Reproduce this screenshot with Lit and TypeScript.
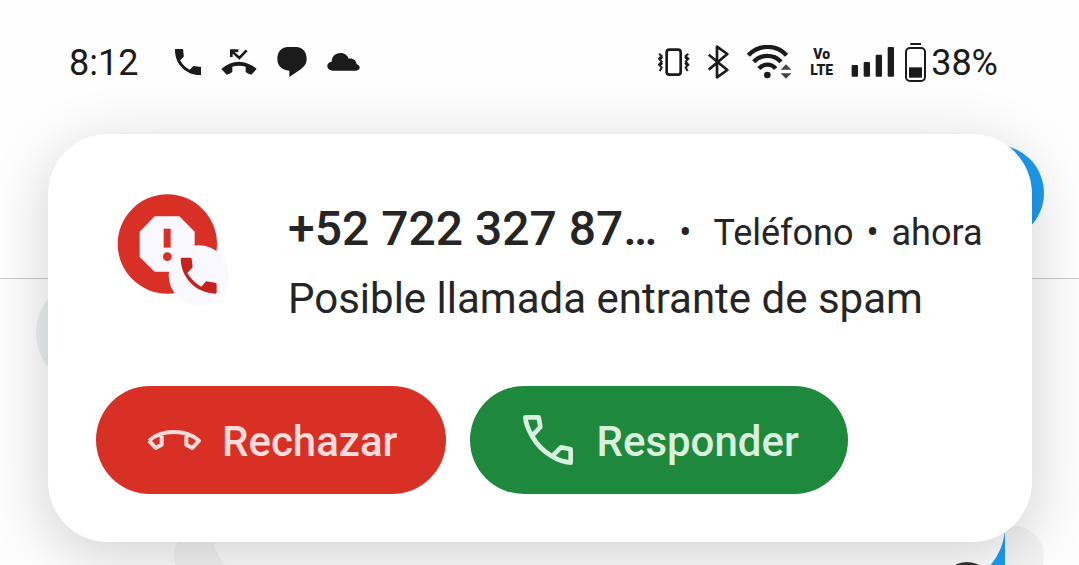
import { LitElement, html, css } from 'lit'
import { customElement, property } from 'lit/decorators.js'

@customElement('status-bar')
class StatusBar extends LitElement {
    static styles = css`
        :host {
            display: flex;
            justify-content: space-between;
            height: 124px;
            padding: 0 81px 0 69px;
            color: #1b1b1b;
            font-size: 36px;
        }

        .group {
            display: flex;
            align-items: center;
            gap: 18px;
        }

        .notifications {
            gap: 20px;
        }

        .time {
            margin-right: 17px;
        }

        .time,
        .percent {
            padding-top: 2px;
        }

        .battery {
            display: flex;
            align-items: center;
            gap: 5px;
        }

        .signals {
            display: flex;
            align-items: center;
            gap: 10px;
        }

        .volte {
            display: grid;
            grid-auto-rows: 16px;
            font-size: 14px;
            font-weight: 900;
            line-height: 16px;
            text-align: center;
        }

        svg {
            display: block;
            fill: currentColor;
        }

        .line {
            fill: none;
            stroke: currentColor;
        }
    `

    render() {
        return html`
            <div class="group notifications">
                <span class="time">8:12</span>
                <svg width="26" height="26" viewBox="3 3 18 18">
                    <path d="M21 15.46l-5.27-.61-2.52 2.52c-2.83-1.44-5.15-3.75-6.59-6.59l2.53-2.53L8.54 3H3.03C2.45 13.18 10.82 21.55 21 20.97v-5.51z" />
                </svg>
                <svg width="36" height="28" viewBox="516 55 108 84">
                    <path d="M517 118Q542 96 570 96T623 118L607 135Q598 133 590 127V111Q570 106 550 111V127Q542 133 533 135Z" />
                    <path class="line" stroke-width="8" d="M547 82V63H568M547 63L571 85L593 62" />
                </svg>
                <svg width="30" height="30" viewBox="681 51 90 90">
                    <path d="M711 51H741C760 53 770 68 770 87C770 106 756 116 740 126L718 141V122C695 120 682 107 682 87C682 67 692 54 711 51Z" />
                </svg>
                <svg width="33" height="18" viewBox="832 66 99 54">
                    <path d="M848 119C828 118 828 94 846 92C847 74 859 66 873 66C885 66 893 73 897 83C910 81 920 88 921 100C934 103 933 119 918 119Z" />
                </svg>
            </div>
            <div class="group">
                <svg width="32" height="28" viewBox="63 53 96 84">
                    <rect class="line" x="89" y="58" width="42" height="75" rx="8" stroke-width="8" />
                    <path class="line" stroke-width="6" d="M66 70L74 77L66 85L74 94L66 103L74 112L68 122M76 80L69 88M76 98L69 106M154 70L146 77L154 85L146 94L154 103L146 112L152 122M144 80L151 88M144 98L151 106" />
                </svg>
                <svg width="21" height="34" viewBox="214 45 63 102">
                    <path class="line" stroke-width="8" stroke-linejoin="round" d="M216 74L272 120L241 142V50L272 72L216 119" />
                </svg>
                <svg width="45" height="34" viewBox="333 43 135 102">
                    <path class="line" stroke-width="13" d="M337 74A78 78 0 0 1 452 74M353 93A57 57 0 0 1 435 93M369 114A32 32 0 0 1 419 114" />
                    <circle cx="394" cy="133" r="10" />
                    <path fill="#444" d="M434 117L450 101L466 117ZM434 128H466L450 144Z" />
                </svg>
                <span class="volte"><span>Vo</span><span>LTE</span></span>
                <div class="signals">
                    <svg width="44" height="30" viewBox="633 51 132 90">
                        <rect x="635" y="105" width="19" height="35" rx="3" />
                        <rect x="671" y="96" width="19" height="44" rx="3" />
                        <rect x="707" y="74" width="19" height="66" rx="3" />
                        <rect x="743" y="51" width="19" height="89" rx="3" />
                    </svg>
                    <div class="battery">
                        <svg width="21" height="39" viewBox="795 36 63 117">
                            <rect x="811" y="36" width="32" height="6" />
                            <rect class="line" x="798" y="51" width="57" height="99" rx="12" stroke-width="6" />
                            <rect x="807" y="109" width="39" height="31" />
                        </svg>
                        <span class="percent">38%</span>
                    </div>
                </div>
            </div>
        `
    }
}

@customElement('call-button')
class CallButton extends LitElement {
    static styles = css`
        button {
            display: flex;
            align-items: center;
            gap: 15px;
            height: 108px;
            padding: 0 49px 0 45px;
            border: 0;
            border-radius: 54px;
            font: 500 42px/48px Roboto, sans-serif;
            cursor: pointer;
        }

        .decline {
            background: #d93025;
            color: #fddcda;
        }

        .answer {
            background: #1e883c;
            color: #d8f0dd;
        }

        .label {
            padding-top: 3px;
        }

        svg {
            width: 66px;
            height: 66px;
            fill: none;
            stroke: currentColor;
            stroke-linejoin: round;
        }
    `

    @property() kind = 'answer'

    icon() {
        if (this.kind === 'decline') {
            return html`
                <svg viewBox="3 -39 198 198" stroke-width="12">
                    <path d="M27 62Q56 36 102 36T177 62L157 84L139 74V42M27 62L47 84L65 74V42" />
                </svg>`
        }
        return html`
            <svg viewBox="165 96 198 198" stroke-width="14">
                <path d="M196 127H236L241 156L216 183Q198 152 196 127Z" />
                <path d="M332 263V223L303 217L276 244Q303 261 332 263Z" />
                <path d="M216 183Q238 222 276 244" />
            </svg>`
    }

    render() {
        return html`
            <button class=${this.kind}>
                ${this.icon()}
                <span class="label"><slot></slot></span>
            </button>
        `
    }
}

@customElement('call-notification')
class CallNotification extends LitElement {
    static styles = css`
        :host {
            display: block;
            padding: 60px 48px 48px;
            border-radius: 60px;
            background: #fff;
            color: #252525;
            box-shadow: 0 12px 60px rgba(0, 0, 0, 0.18);
        }

        .head {
            display: flex;
            gap: 59px;
            height: 192px;
            padding-left: 21px;
        }

        .avatar {
            flex: none;
            width: 112px;
            height: 112px;
        }

        .title {
            display: flex;
            align-items: baseline;
            white-space: nowrap;
            margin-top: 5px;
            line-height: 60px;
        }

        .number {
            font-size: 48px;
            font-weight: 500;
        }

        .meta {
            font-size: 36px;
        }

        .dot {
            margin: 0 22px;
            font-size: 36px;
        }

        .meta .dot {
            margin: 0 4px;
        }

        .text {
            font-size: 42px;
            line-height: 48px;
            margin-top: 12px;
        }

        .actions {
            display: flex;
            gap: 24px;
        }
    `

    render() {
        return html`
            <div class="head">
                <svg class="avatar" viewBox="52 40 336 336">
                    <circle cx="203" cy="190" r="149" fill="#d93025" />
                    <path fill="#f9f8ff" d="M165 107H239L285 153V229L239 273H165L120 229V153Z" />
                    <path fill="#d93025" d="M192 144H213V201H192Z" />
                    <circle cx="203" cy="228" r="13" fill="#d93025" />
                    <circle cx="297" cy="284" r="90" fill="#f9f8ff" />
                    <path fill="#c5221f" d="M247 231H272Q276 231 276 235L279 260L263 277Q278 303 305 318L319 302L347 306Q351 307 351 311V335Q351 339 347 339C289 337 245 293 243 236Q243 231 247 231Z" />
                </svg>
                <div>
                    <div class="title">
                        <span class="number">+52 722 327 87…</span>
                        <span class="dot">•</span>
                        <span class="meta">Teléfono <span class="dot">•</span> ahora</span>
                    </div>
                    <div class="text">Posible llamada entrante de spam</div>
                </div>
            </div>
            <div class="actions">
                <call-button kind="decline">Rechazar</call-button>
                <call-button kind="answer">Responder</call-button>
            </div>
        `
    }
}

@customElement('app-root')
export class AppRoot extends LitElement {
    static styles = css`
        :host {
            display: block;
            position: relative;
            height: 100vh;
            overflow: hidden;
            background: #fdfdfd;
            font-family: Roboto, sans-serif;
        }

        .header {
            display: flex;
            flex-direction: column;
            height: 278px;
            border-bottom: 1px solid #c8cacd;
            background: #fefefe;
        }

        .pill {
            align-self: flex-end;
            width: 200px;
            height: 96px;
            margin: 21px 35px 0 0;
            border-radius: 48px;
            background: #1d9bf0;
        }

        .photo {
            width: 108px;
            height: 108px;
            margin-left: 36px;
            border-radius: 50%;
            background: #ebeeef;
        }

        .reply {
            margin: 139px 35px 0 174px;
            padding: 0 39px 0 37px;
            border-radius: 48px;
            background: #f3f3f3;
        }

        .tint {
            background: linear-gradient(to right, transparent 50%, #1d9bf0 50%);
        }

        .sheet {
            display: flex;
            justify-content: flex-end;
            height: 60px;
            padding-right: 14px;
            border-radius: 0 0 60px 60px;
            background: #fdfdfd;
        }

        .knob {
            width: 48px;
            height: 48px;
            margin-top: 36px;
            border-radius: 50%;
            background: #333;
        }

        /* heads-up card floats over the app behind it */
        call-notification {
            position: absolute;
            top: 134px;
            left: 48px;
            right: 47px;
        }
    `

    render() {
        return html`
            <div class="header">
                <status-bar></status-bar>
                <div class="pill"></div>
            </div>
            <div class="photo"></div>
            <div class="reply">
                <div class="tint">
                    <div class="sheet"><div class="knob"></div></div>
                </div>
            </div>
            <call-notification></call-notification>
        `
    }
}
